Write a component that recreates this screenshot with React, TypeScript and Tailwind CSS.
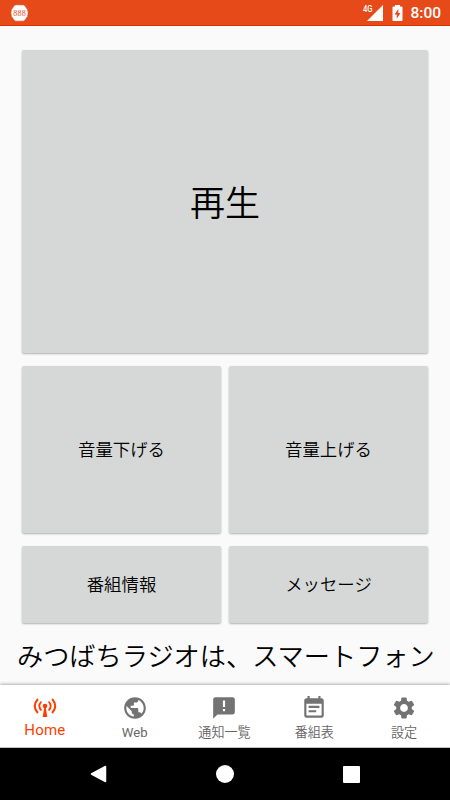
import type { ReactNode } from 'react'
import { MdAnnouncement, MdPublic, MdSettings } from 'react-icons/md'

function StatusBar() {
  return (
    <header className="flex h-[26px] shrink-0 items-center border-b border-[#dd2c00] bg-[#e64a19] pr-[9px] pl-[10px] text-white">
      <svg className="h-[18px] w-[19px]" viewBox="0 0 19 18">
        <path d="M6 .8h7q1 0 1.700.8L17.600 5.500q1.200 3.500 0 7L14.700 16.400q-.7.8-1.700.8H6q-1 0-1.700-.8L1.400 12.500q-1.200-3.500 0-7L4.300 1.600Q5 .8 6 .8z" fill="#fff" stroke="#e62b12" strokeWidth="0.6" />
        <text x="3.300" y="12" fontSize="8" fontFamily="Liberation Serif, serif" fill="#e64a19" textLength="12.500">
          888
        </text>
      </svg>
      <div className="ml-auto flex items-center">
        <svg className="h-[18px] w-[22px]" viewBox="0 0 22 18">
          <text x="1" y="8" fontSize="8.500" fontFamily="Roboto, sans-serif" fontWeight="500" fill="#fff" textLength="9.500" lengthAdjust="spacingAndGlyphs">
            4G
          </text>
          <path d="M21 1v16H5z" fill="#fff" />
        </svg>
        <svg className="ml-[8px] h-[18px] w-[11px]" viewBox="0 0 11 18">
          <path d="M3 1h5v1.600h1.600q.9 0 .9.9v12.600q0 .9-.9.9H1.400q-.9 0-.9-.9V3.500q0-.9.9-.9H3z" fill="#fff" />
          <path d="M6.300 5v4h2.200L4.700 14.800v-4.200H2.500z" fill="#e64a19" />
        </svg>
        <span className="mt-[3px] ml-[7px] text-[15.500px] leading-none font-medium">8:00</span>
      </div>
    </header>
  )
}

function PanelButton({ className, children }: { className: string; children: ReactNode }) {
  return (
    <button
      className={`flex items-center justify-center rounded-[2px] bg-[#d6d8d7] text-black shadow-[0_1px_2px_rgba(0,0,0,0.3)] ${className}`}
    >
      {children}
    </button>
  )
}

function AntennaIcon() {
  return (
    <svg className="h-[22px] w-[24px]" viewBox="0 0 24 22" fill="none" stroke="currentColor">
      <path d="M4.900 2Q-1.400 9 4.900 16M19.100 2Q25.400 9 19.100 16" strokeWidth="2" />
      <path d="M8.400 4.500Q4.200 9 8.400 13.500M15.600 4.500Q19.800 9 15.600 13.500" strokeWidth="1.800" />
      <circle cx="12" cy="9" r="2.300" fill="currentColor" stroke="none" />
      <path d="M11.300 10h1.400L14.300 20H9.700z" fill="currentColor" stroke="none" />
    </svg>
  )
}

function ScheduleIcon() {
  return (
    <svg className="h-[26px] w-[26px]" viewBox="0 0 24 24" fill="currentColor">
      <path d="M17 10H7v2h10v-2zm2-7h-1V1h-2v2H8V1H6v2H5c-1.110 0-1.990.9-1.990 2L3 19c0 1.100.89 2 2 2h14c1.100 0 2-.9 2-2V5c0-1.100-.9-2-2-2zm0 16H5V8h14v11zm-5-5H7v2h7v-2z" />
    </svg>
  )
}

const tabs = [
  { label: 'Web', icon: <MdPublic size={26} />, weight: 'font-normal' },
  { label: '通知一覧', icon: <MdAnnouncement size={26} />, weight: 'font-[350]' },
  { label: '番組表', icon: <ScheduleIcon />, weight: 'font-[350]' },
  { label: '設定', icon: <MdSettings size={26} />, weight: 'font-[350]' },
]

function BottomTabs() {
  return (
    <nav className="grid h-[63px] shrink-0 grid-cols-5 border-b border-[#bdbdbd] bg-white pr-[1px] text-[#737373] shadow-[0_-1px_3px_rgba(0,0,0,0.3)]">
      <button className="flex flex-col items-center pt-[12px] text-[#ff3d00]">
        <AntennaIcon />
        <span className="mt-[1px] text-[15px] leading-[20px] font-normal tracking-[0.2px]">Home</span>
      </button>
      {tabs.map((tab) => (
        <button key={tab.label} className="flex flex-col items-center pt-[10px]">
          {tab.icon}
          <span className={`mt-[2px] text-[13.100px] leading-[20px] text-[#666] ${tab.weight}`}>{tab.label}</span>
        </button>
      ))}
    </nav>
  )
}

function SystemBar() {
  return (
    <footer className="grid h-[52px] shrink-0 grid-cols-[198px_54px_198px] items-center justify-items-center bg-black">
      <svg className="h-5 w-5" viewBox="0 0 20 20">
        <path d="M16.500 2.500v15L2.500 10z" fill="#fff" stroke="#fff" strokeWidth="1.500" strokeLinejoin="round" />
      </svg>
      <div className="h-[18px] w-[18px] rounded-full bg-white" />
      <div className="h-[17px] w-[17px] rounded-[1px] bg-white" />
    </footer>
  )
}

export default function App() {
  return (
    <div className="flex h-[800px] w-[450px] flex-col overflow-hidden bg-[#fafafa] font-['Roboto','Noto_Sans_CJK_JP',sans-serif]">
      <StatusBar />
      <main className="flex grow flex-col">
        <div className="grid grid-cols-2 grid-rows-[303px_167px_77px] gap-x-[8px] gap-y-[13px] px-[22px] pt-[24px] font-[350]">
          <PanelButton className="col-span-2 pt-[7px] text-[35px]">再生</PanelButton>
          <PanelButton className="pt-[2px] text-[17.400px]">音量下げる</PanelButton>
          <PanelButton className="pt-[2px] text-[17.400px]">音量上げる</PanelButton>
          <PanelButton className="pt-[2px] text-[17.400px]">番組情報</PanelButton>
          <PanelButton className="pt-[2px] text-[17.400px]">メッセージ</PanelButton>
        </div>
        <p className="mt-[14px] pl-[17px] text-[26.200px] leading-[40px] font-[350] whitespace-nowrap text-black">
          みつばちラジオは、スマートフォン
        </p>
      </main>
      <BottomTabs />
      <SystemBar />
    </div>
  )
}
